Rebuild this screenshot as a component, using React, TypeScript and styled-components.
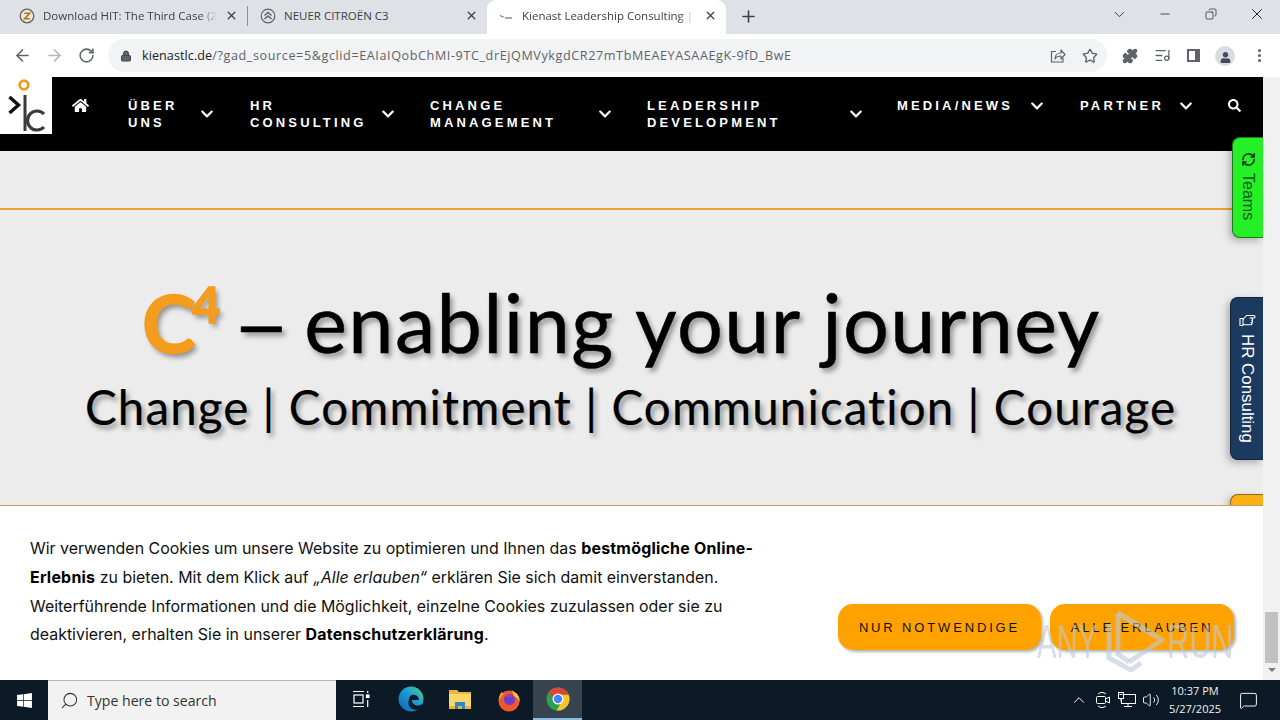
import styled, { createGlobalStyle } from "styled-components";
import { ArrowLeft, ArrowRight, RotateCw, Lock, Star, Puzzle, ListMusic, Plus, X, ChevronDown, Minus, EllipsisVertical, Search, ChevronUp, Volume2, MessageSquare, RefreshCw, Copy } from "lucide-react";
import { FaHome, FaSearch, FaChevronDown, FaWindows, FaUser } from "react-icons/fa";

const Global = createGlobalStyle`
    html, body { margin: 0; padding: 0; overflow: hidden; }
    * { box-sizing: border-box; }
    body { font-family: "Liberation Sans", Arial, sans-serif; }
`
const Screen = styled.div`
    width: 1280px;
    height: 720px;
    display: flex;
    flex-direction: column;
    overflow: hidden;
`
const TabStrip = styled.div`
    height: 34px;
    background: #dee1e6;
    display: flex;
    align-items: stretch;
    flex-shrink: 0;
`
const Tab = styled.div<{ $active?: boolean; $width: number; $pad: number }>`
    width: ${props => props.$width}px;
    padding: 0 9px 3px ${props => props.$pad}px;
    display: flex;
    align-items: center;
    gap: 8px;
    font: 11.5px "Open Sans", sans-serif;
    color: #3c4043;
    background: ${props => props.$active ? "#fff" : "transparent"};
    border-radius: ${props => props.$active ? "9px 9px 0 0" : "0"};
    white-space: nowrap;
    flex-shrink: 0;
`
const TabTitle = styled.span<{ $fade?: boolean }>`
    flex: 1;
    overflow: hidden;
    ${props => props.$fade ? "mask-image: linear-gradient(to right, #000 90%, transparent);" : ""}
`
const TabDivider = styled.div`
    width: 1px;
    height: 20px;
    background: #8e9296;
    align-self: center;
    margin-bottom: 2px;
`
const NewTab = styled.div`
    width: 44px;
    display: flex;
    align-items: center;
    justify-content: center;
    padding-bottom: 2px;
    color: #3c4043;
`
const WindowControls = styled.div`
    margin-left: auto;
    display: flex;
    align-items: flex-start;
    color: #202124;
`
const WindowButton = styled.div<{ $width: number }>`
    width: ${props => props.$width}px;
    height: 28px;
    display: flex;
    align-items: center;
    justify-content: center;
`
const Toolbar = styled.div`
    height: 43px;
    background: #fff;
    display: flex;
    align-items: center;
    padding: 0 0 0 6px;
    flex-shrink: 0;
    color: #5f6368;
`
const NavButton = styled.div<{ $faded?: boolean }>`
    width: 32px;
    display: flex;
    justify-content: center;
    color: ${props => props.$faded ? "#b4b6b9" : "#5f6368"};
`
const Omnibox = styled.div`
    margin-left: 6px;
    width: 999px;
    height: 33px;
    border-radius: 17px;
    background: #f1f3f4;
    display: flex;
    align-items: center;
    padding: 0 9px 0 12px;
    gap: 10px;
    color: #3c4043;
`
const UrlText = styled.div`
    font: 12.6px "Open Sans", sans-serif;
    color: #5f6368;
    flex: 1;
    white-space: nowrap;
    letter-spacing: 0.6px;
    b { font-weight: 400; color: #202124; letter-spacing: 0.07px; }
`
const OmniActions = styled.div`
    display: flex;
    gap: 16px;
    color: #5f6368;
`
const ToolIcons = styled.div`
    display: flex;
    align-items: center;
    gap: 16px;
    margin-left: 15px;
    color: #5f6368;
`
const Avatar = styled.div`
    width: 20px;
    height: 20px;
    border-radius: 50%;
    background: #dadce0;
    color: #444a5a;
    display: flex;
    align-items: flex-end;
    justify-content: center;
    overflow: hidden;
    padding-bottom: 3px;
    margin-left: -1px;
`
const SidePanelGlyph = styled.div`
    width: 13px;
    height: 13px;
    border: 2px solid #5f6368;
    border-right-width: 5px;
`
const Viewport = styled.div`
    flex: 1;
    display: flex;
    position: relative;
    overflow: hidden;
    min-height: 0;
`
const Page = styled.div`
    flex: 1;
    display: flex;
    flex-direction: column;
    position: relative;
    overflow: hidden;
    background: #ececec;
`
const SiteNav = styled.div`
    height: 74px;
    background: #000;
    display: flex;
    align-items: flex-start;
    flex-shrink: 0;
    color: #fff;
`
const LogoBox = styled.div`
    width: 52px;
    height: 57px;
    background: #fff;
    flex-shrink: 0;
`
const HomeItem = styled.div`
    width: 57px;
    height: 57px;
    display: flex;
    align-items: center;
    justify-content: center;
    flex-shrink: 0;
`
const NavItem = styled.div<{ $width: number; $gap: number; $tall?: boolean }>`
    width: ${props => props.$width}px;
    height: ${props => props.$tall ? 74 : 57}px;
    padding-left: 19px;
    display: flex;
    align-items: center;
    gap: ${props => props.$gap}px;
    flex-shrink: 0;
    svg { flex-shrink: 0; }
`
const NavLabel = styled.div`
    font: bold 13px/17px "Liberation Sans", sans-serif;
    letter-spacing: 3.15px;
    text-transform: uppercase;
`
const Content = styled.div`
    flex: 1;
    display: flex;
    flex-direction: column;
    padding-top: 57px;
`
const Rule = styled.div`
    height: 2px;
    background: #f0a030;
`
const Hero = styled.div`
    display: flex;
    flex-direction: column;
    padding-left: 85px;
    font-family: Lato, "Open Sans", sans-serif;
    font-variant-ligatures: none;
    color: #000;
    text-shadow: 3px 4px 5px rgba(0, 0, 0, .38);
`
const HeroTitle = styled.div`
    font-size: 81px;
    line-height: 100px;
    letter-spacing: 1.4px;
    margin-top: 62px;
    margin-left: 57px;
    white-space: nowrap;
    -webkit-text-stroke: .5px #000;
`
const C4 = styled.span`
    color: #f39c1d;
    font-weight: 700;
    letter-spacing: 0;
    margin-right: 11px;
    -webkit-text-stroke: 1.5px #f39c1d;
    sup {
        font-size: 50px;
        line-height: 0;
        vertical-align: 30px;
        margin-left: -4px;
    }
`
const HeroDash = styled.span`
    display: inline-block;
    transform: scaleX(1.25);
    transform-origin: left;
    margin-right: 2px;
`
const HeroSub = styled.div`
    font-size: 47.5px;
    line-height: 62px;
    letter-spacing: 1.1px;
    margin-top: 4px;
    white-space: nowrap;
    -webkit-text-stroke: .2px #000;
`
const SideTab = styled.div<{ $top: number; $height: number; $width: number; $bg: string; $border: string; $color: string; $font: number }>`
    position: absolute;
    right: 0;
    top: ${props => props.$top}px;
    width: ${props => props.$width}px;
    height: ${props => props.$height}px;
    background: ${props => props.$bg};
    border: 1px solid ${props => props.$border};
    border-right: 0;
    border-radius: 8px 0 0 8px;
    color: ${props => props.$color};
    box-shadow: -3px 3px 7px rgba(0, 0, 0, .25);
    display: flex;
    align-items: center;
    justify-content: flex-start;
    padding-top: 14px;
    gap: 6px;
    writing-mode: vertical-rl;
    font: ${props => props.$font}px/29px "Liberation Sans", sans-serif;
    white-space: nowrap;
`
const UprightIcon = styled.span`
    display: inline-flex;
    writing-mode: horizontal-tb;
`
const CookieBanner = styled.div`
    position: absolute;
    left: 0;
    right: 0;
    bottom: 0;
    height: 175px;
    background: #fff;
    border-top: 1px solid #cf9a5c;
    display: flex;
    align-items: flex-end;
    padding: 0 29px 30px 30px;
`
const CookieText = styled.div`
    width: 745px;
    font: 15.95px/28.67px Inter, "Liberation Sans", sans-serif;
    color: #111;
    b { font-weight: 700; color: #000; letter-spacing: .22px; }
`
const CookieButtons = styled.div`
    margin-left: auto;
    display: flex;
    gap: 9px;
`
const CookieButton = styled.div<{ $width: number }>`
    width: ${props => props.$width}px;
    height: 46px;
    border-radius: 15px;
    background: #ffa200;
    box-shadow: 2px 2px 3px rgba(0, 0, 0, .3);
    font: 13px "Liberation Sans", sans-serif;
    letter-spacing: 2.85px;
    color: #111;
    display: flex;
    align-items: center;
    justify-content: center;
    white-space: nowrap;
`
const Scrollbar = styled.div`
    width: 17px;
    background: #f1f1f1;
    display: flex;
    flex-direction: column;
    justify-content: flex-end;
    flex-shrink: 0;
`
const ScrollThumb = styled.div`
    height: 51px;
    margin: 0 2px 17px;
    background: #c1c1c1;
`
const ScrollArrow = styled.div`
    position: absolute;
    right: 4px;
    bottom: 8px;
    width: 0;
    height: 0;
    border-left: 4px solid transparent;
    border-right: 4px solid transparent;
    border-top: 4px solid #7a7a7a;
`
const Watermark = styled.div`
    position: absolute;
    left: 1037px;
    top: 533px;
    height: 62px;
    display: flex;
    align-items: center;
    font: 48px "Liberation Sans", sans-serif;
    color: rgba(190, 200, 215, .6);
    pointer-events: none;
`
const WatermarkWord = styled.span<{ $width: number; $scale: number }>`
    display: inline-block;
    width: ${props => props.$width}px;
    transform: scaleX(${props => props.$scale});
    transform-origin: left;
    white-space: nowrap;
`
const Taskbar = styled.div`
    height: 40px;
    background: #0b1a26;
    display: flex;
    align-items: stretch;
    flex-shrink: 0;
    color: #fff;
`
const StartButton = styled.div`
    width: 48px;
    display: flex;
    align-items: center;
    justify-content: center;
`
const SearchBox = styled.div`
    width: 288px;
    background: #f2f2f2;
    border-top: 1px solid #b5b5b5;
    display: flex;
    align-items: center;
    padding-left: 12px;
    gap: 8px;
    font: 14.1px "Open Sans", sans-serif;
    color: #333;
`
const TaskIcon = styled.div<{ $active?: boolean; $width?: number }>`
    width: ${props => props.$width || 49}px;
    display: flex;
    align-items: center;
    justify-content: center;
    background: ${props => props.$active ? "#37444f" : "transparent"};
    border-bottom: 2px solid ${props => props.$active ? "#8fbce6" : "transparent"};
`
const Tray = styled.div`
    margin-left: auto;
    padding-right: 9px;
    display: flex;
    align-items: center;
    color: #fff;
`
const TrayIcon = styled.div`
    width: 24px;
    display: flex;
    justify-content: center;
`
const Clock = styled.div`
    width: 60px;
    margin-left: 2px;
    text-align: center;
    font: 11px/18px "Open Sans", sans-serif;
    color: #f2f2f2;
`
const Notify = styled.div`
    width: 46px;
    display: flex;
    justify-content: center;
`

const navItems = [
    { label: <>Über<br />uns</>, width: 122, gap: 23, tall: true },
    { label: <>HR<br />Consulting</>, width: 180, gap: 15, tall: true },
    { label: <>Change<br />Management</>, width: 217, gap: 42, tall: true },
    { label: <>Leadership<br />Development</>, width: 250, gap: 68, tall: true },
    { label: <>Media/News</>, width: 183, gap: 17, tall: false },
    { label: <>Partner</>, width: 145, gap: 15, tall: false },
]

function ZFavicon() {
    return (
        <svg width="16" height="16" viewBox="0 0 16 16">
            <circle cx="8" cy="8" r="6.8" fill="#f1e6d4" stroke="#5f6368" strokeWidth="1.3" />
            <path d="M5.4 5.2h5.2L5.6 10.8h5.2" fill="none" stroke="#a8752c" strokeWidth="1.6" />
        </svg>
    )
}

function CitroenFavicon() {
    return (
        <svg width="16" height="16" viewBox="0 0 16 16">
            <circle cx="8" cy="8" r="6.8" fill="none" stroke="#5f6368" strokeWidth="1.2" />
            <path d="M4.5 7.5 8 4.5l3.5 3M4.5 11 8 8l3.5 3" fill="none" stroke="#5f6368" strokeWidth="1.5" />
        </svg>
    )
}

function ShareIcon() {
    return (
        <svg width="16" height="16" viewBox="0 0 16 16" fill="none" stroke="#5f6368" strokeWidth="1.2" strokeLinejoin="round">
            <path d="M6 3.500H1.500v10.500h11.500v-4" />
            <path d="M5 11c0-4 3-6 6-6V2l4 4.500L11 11V8c-3 0-5 1-6 3z" />
        </svg>
    )
}

function PointingHand() {
    return (
        <svg width="17" height="16" viewBox="0 0 17 16" fill="none" stroke="#fff" strokeWidth="1.1" strokeLinejoin="round">
            <rect x="1" y="6.500" width="3" height="7" />
            <path d="M4 7.500 7.500 3.500h7.300a1.200 1.200 0 0 1 0 2.500h-4.300" />
            <path d="M12.500 6a1.100 1.100 0 0 1 0 2.300a1.100 1.100 0 0 1 0 2.300h-.5a1 1 0 0 1 0 2.200H7L4 12.500" />
        </svg>
    )
}

function KlcLogo() {
    return (
        <svg width="52" height="57" viewBox="0 0 52 57">
            <rect width="52" height="57" fill="#fff" />
            <circle cx="24" cy="8" r="4.3" fill="none" stroke="#f39a25" strokeWidth="2.8" />
            <path d="M9.500 20l9 8-9 8" fill="none" stroke="#111" strokeWidth="3.400" />
            <path d="M25 18v36" stroke="#3a3a3a" strokeWidth="3" />
            <path d="M44 37a9.500 9.500 0 1 0 0 13" fill="none" stroke="#3a3a3a" strokeWidth="3.200" />
        </svg>
    )
}

function EdgeIcon() {
    return (
        <svg width="26" height="26" viewBox="0 0 26 26">
            <defs>
                <linearGradient id="edgeFill" x1="0" y1="1" x2="1" y2="0">
                    <stop offset="0" stopColor="#0d62b5" />
                    <stop offset=".55" stopColor="#1b9bd6" />
                    <stop offset="1" stopColor="#4fd07f" />
                </linearGradient>
            </defs>
            <circle cx="13" cy="13" r="12.500" fill="url(#edgeFill)" />
            <path d="M11 13c0-3 3-5 6-4 3 .8 4 3 3.500 5H14c-.5 2 1 5 5 5.500 2 .2 4-.5 5.500-1.500-.8 2-2 3.500-3.500 5-4 1.500-8 .5-10-3-1-2-.5-5 0-7z" fill="#0b1a26" />
        </svg>
    )
}

function FolderIcon() {
    return (
        <svg width="24" height="22" viewBox="0 0 24 22">
            <path d="M1 2h8l2 2h12v4H1z" fill="#e9b53c" />
            <rect x="1" y="6" width="22" height="15" fill="#f9d76b" />
            <rect x="1" y="18" width="22" height="3" fill="#e9b53c" />
            <path d="M7 14h10v7h-3v-3h-4v3H7z" fill="#2f86c9" />
        </svg>
    )
}

function FirefoxIcon() {
    return (
        <svg width="26" height="26" viewBox="0 0 26 26">
            <circle cx="13" cy="15" r="10.500" fill="#f0572c" />
            <path d="M14 1c1 3 3 4 6 6 3 2.500 4 6 3.500 9-1-3-3-5-6-6 0-3-2-6-3.500-9z" fill="#ffc233" />
            <path d="M2.600 14C3 10 4.500 7 6 5.500c0 1.500.7 2.500 2 2.500-2 2-3.500 4-5.400 6z" fill="#ff9a2b" />
            <circle cx="13.500" cy="13.500" r="5.500" fill="#6d3ec9" />
            <path d="M9 10c3-2 7-1 8.500 1.500C15 10.500 12 11 9 10z" fill="#c13fa8" />
        </svg>
    )
}

function ChromeIcon() {
    return (
        <svg width="24" height="24" viewBox="0 0 24 24">
            <circle cx="12" cy="12" r="11.500" fill="#2e9e4f" />
            <path d="M2.100 6.200A11.500 11.500 0 0 1 22.700 7.800H12a4.500 4.500 0 0 0-4 2.500z" fill="#db4437" />
            <path d="M22.700 7.800A11.500 11.500 0 0 1 10.500 23.400l5.300-9.200a4.500 4.500 0 0 0 0-6.400z" fill="#f7c42c" />
            <circle cx="12" cy="12" r="5.500" fill="#fff" />
            <circle cx="12" cy="12" r="4.200" fill="#4285f4" />
        </svg>
    )
}

function TaskViewIcon() {
    return (
        <svg width="18" height="18" viewBox="0 0 18 18" fill="none" stroke="#fff" strokeWidth="1.2">
            <path d="M1 1.500h11M1 16.500h11" />
            <rect x="2" y="5" width="9" height="8" />
            <rect x="14.500" y="5" width="2.500" height="2.500" fill="#fff" />
            <path d="M15.700 1v2M15.700 10v7" />
        </svg>
    )
}

function MeetIcon() {
    return (
        <svg width="17" height="18" viewBox="0 0 17 18" fill="none" stroke="#fff" strokeWidth="1">
            <path d="M3 3a6 6 0 0 1 8 0M3 15a6 6 0 0 0 8 0" />
            <rect x="1.500" y="5.500" width="9" height="7" rx="1" />
            <path d="M10.500 8l4-2v6l-4-2" />
        </svg>
    )
}

function NetworkIcon() {
    return (
        <svg width="18" height="16" viewBox="0 0 18 16" fill="none" stroke="#fff" strokeWidth="1">
            <rect x="3.500" y="2.500" width="14" height="9" />
            <path d="M10 11.500v3M6 14.500h8" />
            <rect x=".5" y=".5" width="5" height="6" fill="#0b1a26" />
            <path d="M1.500 2.500h3M3 6.500v3" />
        </svg>
    )
}

function PlayMark() {
    return (
        <svg width="62" height="62" viewBox="0 0 62 62" fill="none" stroke="rgba(190,200,215,.6)" strokeWidth="5" strokeLinejoin="round">
            <path d="M13 3 57 30 24 52" />
            <path d="M13 3v41l11 8" />
            <path d="M4 14v34l22 12 10-7" />
        </svg>
    )
}

export default function App() {
    return (
        <Screen>
            <Global />
            <TabStrip>
                <Tab $width={247} $pad={19}>
                    <ZFavicon />
                    <TabTitle $fade>Download HIT: The Third Case (2</TabTitle>
                    <X size={13} strokeWidth={2.4} />
                </Tab>
                <TabDivider />
                <Tab $width={239} $pad={12}>
                    <CitroenFavicon />
                    <TabTitle>NEUER CITROËN C3</TabTitle>
                    <X size={13} strokeWidth={2.4} />
                </Tab>
                <Tab $active $width={239} $pad={11}>
                    <svg width="16" height="16" viewBox="0 0 16 16"><path d="M2 7c1.500 2 3 2 4 1.500M7 10h7" stroke="#8a8f94" strokeWidth="1.300" fill="none" /></svg>
                    <TabTitle $fade>Kienast Leadership Consulting | (</TabTitle>
                    <X size={13} strokeWidth={2.4} />
                </Tab>
                <NewTab><Plus size={19} strokeWidth={2} /></NewTab>
                <WindowControls>
                    <WindowButton $width={46}><ChevronDown size={17} strokeWidth={1.2} /></WindowButton>
                    <WindowButton $width={46}><Minus size={14} strokeWidth={1.3} /></WindowButton>
                    <WindowButton $width={46}><Copy size={12} strokeWidth={1.4} style={{ transform: "scaleX(-1)" }} /></WindowButton>
                    <WindowButton $width={46}><X size={18} strokeWidth={1.3} /></WindowButton>
                </WindowControls>
            </TabStrip>
            <Toolbar>
                <NavButton><ArrowLeft size={19} strokeWidth={2} /></NavButton>
                <NavButton $faded><ArrowRight size={19} strokeWidth={2} /></NavButton>
                <NavButton><RotateCw size={17} strokeWidth={2.2} /></NavButton>
                <Omnibox>
                    <Lock size={12} fill="#5f6368" />
                    <UrlText><b>kienastlc.de</b>/?gad_source=5&amp;gclid=EAIaIQobChMI-9TC_drEjQMVykgdCR27mTbMEAEYASAAEgK-9fD_BwE</UrlText>
                    <OmniActions>
                        <ShareIcon />
                        <Star size={16} strokeWidth={2} />
                    </OmniActions>
                </Omnibox>
                <ToolIcons>
                    <Puzzle size={16} fill="#5f6368" />
                    <ListMusic size={17} strokeWidth={1.8} />
                    <SidePanelGlyph />
                    <Avatar><FaUser size={11} /></Avatar>
                    <EllipsisVertical size={17} strokeWidth={2.4} />
                </ToolIcons>
            </Toolbar>
            <Viewport>
                <Page>
                    <SiteNav>
                        <LogoBox><KlcLogo /></LogoBox>
                        <HomeItem><FaHome size={17} /></HomeItem>
                        {navItems.map((item, i) => (
                            <NavItem key={i} $width={item.width} $gap={item.gap} $tall={item.tall}>
                                <NavLabel>{item.label}</NavLabel>
                                <FaChevronDown size={14} />
                            </NavItem>
                        ))}
                        <HomeItem><FaSearch size={13} /></HomeItem>
                    </SiteNav>
                    <Content>
                        <Rule />
                        <Hero>
                            <HeroTitle><C4>C<sup>4</sup></C4><HeroDash>–</HeroDash> enabling your journey</HeroTitle>
                            <HeroSub>Change | Commitment | Communication | Courage</HeroSub>
                        </Hero>
                    </Content>
                    <SideTab $top={60} $height={101} $width={31} $bg="#25ef25" $border="#1d7a1d" $color="#0f5a1c" $font={16}>
                        <UprightIcon><RefreshCw size={15} strokeWidth={2.6} color="#123a1c" /></UprightIcon>Teams
                    </SideTab>
                    <SideTab $top={220} $height={163} $width={33} $bg="#1c3a60" $border="#13243b" $color="#fff" $font={16.9}>
                        <UprightIcon><PointingHand /></UprightIcon>HR Consulting
                    </SideTab>
                    <SideTab $top={417} $height={30} $width={33} $bg="#fbb017" $border="#8f6a1a" $color="#000" $font={16} />
                    <CookieBanner>
                        <CookieText>
                            Wir verwenden Cookies um unsere Website zu optimieren und Ihnen das <b>bestmögliche Online-Erlebnis</b> zu bieten. Mit dem Klick auf <i>„Alle erlauben“</i> erklären Sie sich damit einverstanden. Weiterführende Informationen und die Möglichkeit, einzelne Cookies zuzulassen oder sie zu deaktivieren, erhalten Sie in unserer <b>Datenschutzerklärung</b>.
                        </CookieText>
                        <CookieButtons>
                            <CookieButton $width={203}>NUR NOTWENDIGE</CookieButton>
                            <CookieButton $width={184}>ALLE ERLAUBEN</CookieButton>
                        </CookieButtons>
                    </CookieBanner>
                </Page>
                <Scrollbar>
                    <ScrollThumb />
                    <ScrollArrow />
                </Scrollbar>
                <Watermark>
                    <WatermarkWord $width={68} $scale={.61}>ANY</WatermarkWord>
                    <PlayMark />
                    <WatermarkWord $width={64} $scale={.64}>RUN</WatermarkWord>
                </Watermark>
            </Viewport>
            <Taskbar>
                <StartButton><FaWindows size={17} /></StartButton>
                <SearchBox>
                    <Search size={19} strokeWidth={1.3} style={{ transform: "scaleX(-1)" }} />
                    Type here to search
                </SearchBox>
                <TaskIcon $width={50}><TaskViewIcon /></TaskIcon>
                <TaskIcon><EdgeIcon /></TaskIcon>
                <TaskIcon><FolderIcon /></TaskIcon>
                <TaskIcon><FirefoxIcon /></TaskIcon>
                <TaskIcon $active><ChromeIcon /></TaskIcon>
                <Tray>
                    <TrayIcon><ChevronUp size={18} strokeWidth={1.3} /></TrayIcon>
                    <TrayIcon><MeetIcon /></TrayIcon>
                    <TrayIcon><NetworkIcon /></TrayIcon>
                    <TrayIcon><Volume2 size={18} strokeWidth={1.2} /></TrayIcon>
                    <Clock>10:37 PM<br />5/27/2025</Clock>
                    <Notify><MessageSquare size={19} strokeWidth={1.2} /></Notify>
                </Tray>
            </Taskbar>
        </Screen>
    )
}
